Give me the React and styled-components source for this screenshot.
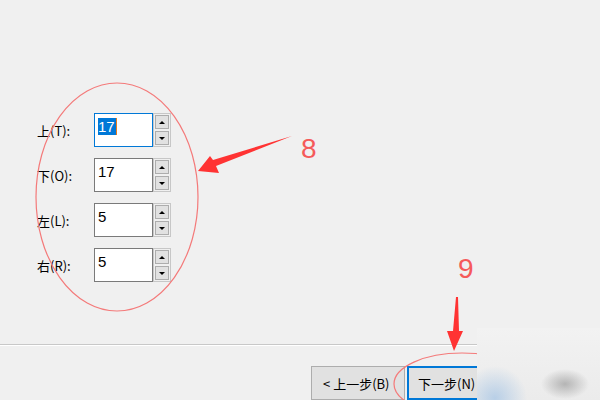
import React from "react";
import styled, { createGlobalStyle } from "styled-components";

const GlobalStyle = createGlobalStyle`
  html, body {
    margin: 0;
    padding: 0;
    background: #f0f0f0;
  }
  body {
    font-family: "Noto Sans CJK SC", "Noto Sans", sans-serif;
    font-size: 13px;
    color: #000;
  }
`;

const Page = styled.div`
  position: relative;
  width: 600px;
  height: 400px;
  overflow: hidden;
  background: #f0f0f0;
  display: flex;
  flex-direction: column;
`;

const Content = styled.div`
  height: 346px;
  padding: 113px 0 0 37px;
  box-sizing: border-box;
  display: flex;
  flex-direction: column;
  gap: 11px;
`;

const Row = styled.div`
  display: flex;
  align-items: center;
  height: 34px;
`;

const Label = styled.label`
  width: 57px;
  font-size: 13px;
  line-height: 15px;
`;

const Spin = styled.div`
  display: flex;
  height: 34px;
`;

const TextBox = styled.div`
  width: 59px;
  height: 34px;
  box-sizing: border-box;
  background: #fff;
  border: 1px solid ${(p) => (p.$focused ? "#0078d7" : "#7a7a7a")};
  padding: 5px 0 0 3px;
  font-family: "Liberation Sans", Arial, sans-serif;
  font-size: 15px;
  line-height: 16px;
`;

const Selected = styled.span`
  background: #0078d7;
  color: #fff;
  padding: 0 1px 0 0;
  border-right: 1px solid #e87b1d;
`;

const Buttons = styled.div`
  width: 18px;
  display: flex;
  flex-direction: column;
  background: #f0f0f0;
  border: 1px solid #c7c7c7;
  box-sizing: border-box;
`;

const Arrow = styled.div`
  flex: 1;
  margin: 1px;
  background: #e1e1e1;
  border: 1px solid #adadad;
  display: flex;
  align-items: center;
  justify-content: center;
  &::after {
    content: "";
    width: 0;
    height: 0;
    border-left: 3px solid transparent;
    border-right: 3px solid transparent;
    ${(p) =>
      p.$up
        ? "border-bottom: 3px solid #000;"
        : "border-top: 3px solid #000;"}
  }
`;

const Separator = styled.div`
  height: 1px;
  background: #c8c8c8;
  border-bottom: 1px solid #fff;
`;

const Footer = styled.div`
  display: flex;
  gap: 2px;
  padding: 20px 0 0 311px;
`;

const Button = styled.button`
  width: ${(p) => p.$width}px;
  height: 34px;
  box-sizing: border-box;
  background: #e1e1e1;
  border: ${(p) => (p.$primary ? "2px solid #0078d7" : "1px solid #adadad")};
  font-family: "Noto Sans CJK SC", "Noto Sans", sans-serif;
  font-size: 13px;
  text-align: left;
  white-space: nowrap;
  padding: 0 0 0 ${(p) => (p.$primary ? 9 : 11)}px;
  color: #000;
`;

const Blur = styled.div`
  position: absolute;
  left: 477px;
  top: 328px;
  width: 123px;
  height: 72px;
  background:
    radial-gradient(circle at 18px 70px, rgba(175, 202, 230, 0.85), rgba(200, 220, 238, 0) 32px),
    radial-gradient(ellipse 24px 15px at 88px 56px, rgba(150, 150, 150, 0.65), rgba(200, 200, 200, 0)),
    linear-gradient(#f2f2f2, #ebebeb);
`;

const Mark = styled.svg`
  position: absolute;
  left: 0;
  top: 0;
  width: 600px;
  height: 400px;
  pointer-events: none;
`;

const Num = styled.text`
  font-family: "Liberation Sans", Arial, sans-serif;
  font-size: 28px;
  fill: #f55a5a;
`;

const fields = [
  { label: "上(T):", value: "17", focused: true },
  { label: "下(O):", value: "17" },
  { label: "左(L):", value: "5" },
  { label: "右(R):", value: "5" },
];

export default function App() {
  return (
    <>
      <GlobalStyle />
      <Page>
        <Content>
          {fields.map((f) => (
            <Row key={f.label}>
              <Label>{f.label}</Label>
              <Spin>
                <TextBox $focused={f.focused}>
                  {f.focused ? <Selected>{f.value}</Selected> : f.value}
                </TextBox>
                <Buttons>
                  <Arrow $up />
                  <Arrow />
                </Buttons>
              </Spin>
            </Row>
          ))}
        </Content>
        <Separator />
        <Footer>
          <Button $width={94}>&lt; 上一步(B)</Button>
          <Button $width={90} $primary>
            下一步(N)
          </Button>
        </Footer>
        <Mark viewBox="0 0 600 400">
          <ellipse cx="117" cy="197" rx="81" ry="114" fill="none" stroke="#f47a7a" strokeWidth="1.2" />
          <ellipse cx="462" cy="384" rx="68" ry="31" fill="none" stroke="#f47a7a" strokeWidth="1.2" />
          <polygon points="198,171 210,156 213,160 292,136 216,166 219,173" fill="#f33" />
          <polygon points="456,297 458,297 459,331 463,331 454,351 447,331 453,331" fill="#f33" />
          <Num x="301" y="158">8</Num>
          <Num x="458" y="278">9</Num>
        </Mark>
        <Blur />
      </Page>
    </>
  );
}
